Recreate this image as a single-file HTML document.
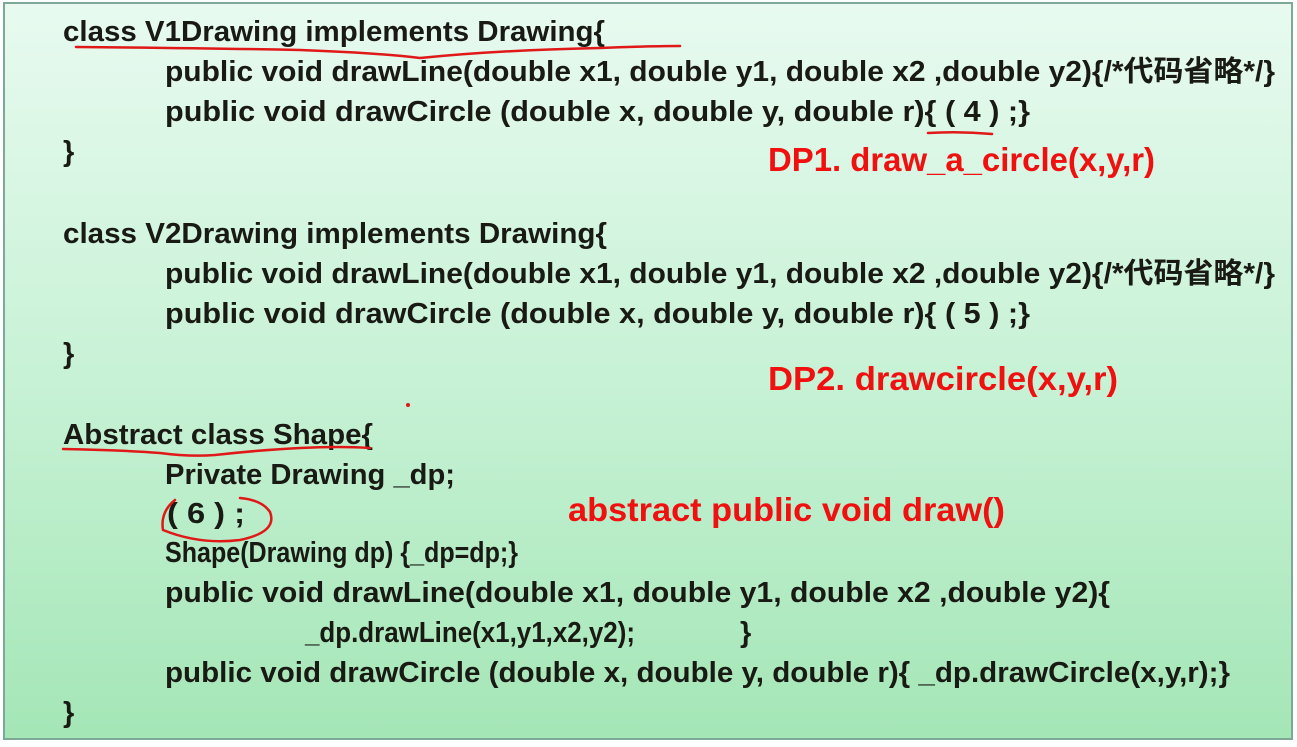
<!DOCTYPE html>
<html><head><meta charset="utf-8"><style>
html,body{margin:0;padding:0;width:1297px;height:747px;overflow:hidden;background:#fff}
svg{display:block}
text{font-family:"Liberation Sans","Noto Sans CJK SC",sans-serif;font-weight:bold}
.k{fill:#1a1a14;font-size:29px}
.r{fill:#f01010;font-size:33px}
</style></head><body>
<svg width="1297" height="747" xmlns="http://www.w3.org/2000/svg">
<defs><linearGradient id="g" x1="0" y1="0" x2="0" y2="1">
<stop offset="0" stop-color="#e8faf0"/><stop offset="0.5" stop-color="#c8f2d6"/><stop offset="1" stop-color="#a4e6b6"/></linearGradient></defs>
<rect width="1297" height="747" fill="#fff"/>
<rect x="4" y="3" width="1288" height="736" fill="url(#g)" stroke="#7ea898" stroke-width="2"/>
<g class="k">
<text x="63" y="41" textLength="542" lengthAdjust="spacingAndGlyphs">class V1Drawing implements Drawing{</text>
<text x="165" y="81" textLength="1110" lengthAdjust="spacingAndGlyphs">public void drawLine(double x1, double y1, double x2 ,double y2){/*代码省略*/}</text>
<text x="165" y="121" textLength="865" lengthAdjust="spacingAndGlyphs">public void drawCircle (double x, double y, double r){ ( 4 ) ;}</text>
<text x="63" y="161">}</text>
<text x="63" y="243" textLength="544" lengthAdjust="spacingAndGlyphs">class V2Drawing implements Drawing{</text>
<text x="165" y="283" textLength="1110" lengthAdjust="spacingAndGlyphs">public void drawLine(double x1, double y1, double x2 ,double y2){/*代码省略*/}</text>
<text x="165" y="323" textLength="865" lengthAdjust="spacingAndGlyphs">public void drawCircle (double x, double y, double r){ ( 5 ) ;}</text>
<text x="63" y="363">}</text>
<text x="63" y="444" textLength="310" lengthAdjust="spacingAndGlyphs">Abstract class Shape{</text>
<text x="165" y="484" textLength="290" lengthAdjust="spacingAndGlyphs">Private Drawing _dp;</text>
<text x="167" y="523" textLength="78" lengthAdjust="spacingAndGlyphs">( 6 ) ;</text>
<text x="165" y="562" textLength="353" lengthAdjust="spacingAndGlyphs">Shape(Drawing dp) {_dp=dp;}</text>
<text x="165" y="602" textLength="945" lengthAdjust="spacingAndGlyphs">public void drawLine(double x1, double y1, double x2 ,double y2){</text>
<text x="305" y="642" textLength="330" lengthAdjust="spacingAndGlyphs">_dp.drawLine(x1,y1,x2,y2);</text>
<text x="740" y="642">}</text>
<text x="165" y="682" textLength="1065" lengthAdjust="spacingAndGlyphs">public void drawCircle (double x, double y, double r){ _dp.drawCircle(x,y,r);}</text>
<text x="63" y="722">}</text>
</g>
<g class="r">
<text x="768" y="171" textLength="387" lengthAdjust="spacingAndGlyphs">DP1. draw_a_circle(x,y,r)</text>
<text x="768" y="390" textLength="350" lengthAdjust="spacingAndGlyphs">DP2. drawcircle(x,y,r)</text>
<text x="568" y="521" textLength="437" lengthAdjust="spacingAndGlyphs">abstract public void draw()</text>
</g>
<g fill="none" stroke="#e01818" stroke-width="2.5" stroke-linecap="round">
<path d="M76 47 Q200 48 300 50 Q380 53 420 58 Q500 50 600 48 Q650 46 680 46"/>
<path d="M928 133 Q960 131 992 134"/>
<path d="M63 449 Q120 450 160 453 Q190 457 215 455 Q260 450 300 448 Q340 446 370 448"/>
<path d="M175 500 Q160 512 163 530 Q200 545 240 540 Q278 532 270 512 Q262 500 240 498"/>
</g>
<circle cx="408" cy="405" r="2" fill="#e01818"/>
</svg>
</body></html>
